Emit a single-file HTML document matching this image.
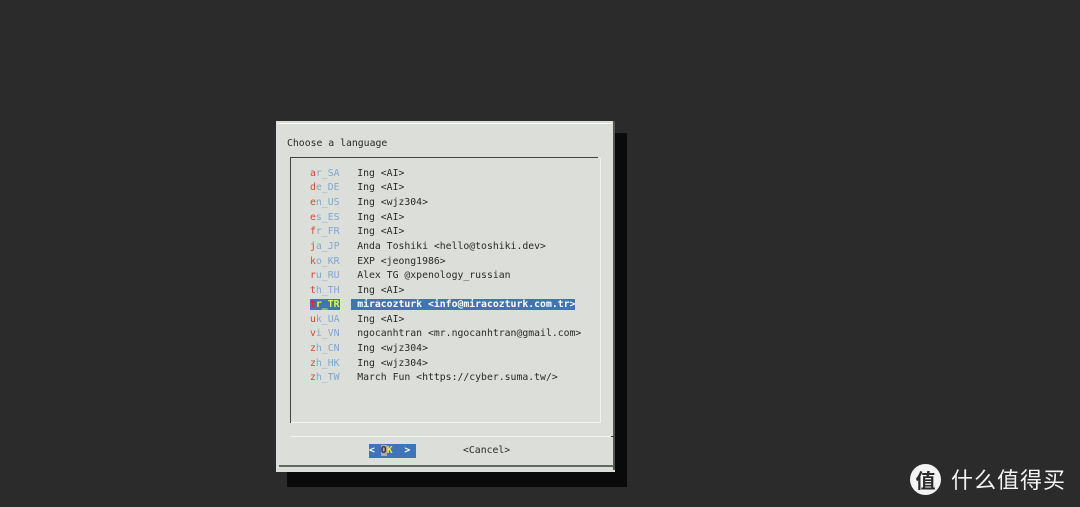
<!DOCTYPE html>
<html><head><style>
body{margin:0;width:1080px;height:507px;background:#2b2b2b;position:relative;overflow:hidden;font-family:"DejaVu Sans Mono","Liberation Mono",monospace;font-size:9.8px;color:#2a2a2a;}
.sh{position:absolute;left:287px;top:133px;width:340px;height:354px;background:#0a0a0a;}
.dlg{position:absolute;left:276px;top:121px;width:339px;height:351px;background:#dcdfd9;}
.t{position:absolute;white-space:pre;}
.row{position:absolute;left:310px;height:14px;line-height:14px;white-space:pre;}
.c{color:#d04a34}.b{color:#7ea6d4}
.sel{background:#3f74b8;color:#fff;}
</style></head><body>
<div class="sh"></div>
<div class="dlg">
 <div style="position:absolute;left:2px;top:2px;width:334px;height:1px;background:#fff"></div>
 <div style="position:absolute;right:0;top:0;width:2px;height:349px;background:#555"></div>
 <div style="position:absolute;left:3px;bottom:5px;width:334px;height:2px;background:#666"></div>
</div>
<div class="t" style="left:287px;top:137px;line-height:14px">Choose a language</div>
<div style="position:absolute;left:290px;top:157px;width:308px;height:1px;background:#444"></div>
<div style="position:absolute;left:290px;top:157px;width:1px;height:266px;background:#444"></div>
<div style="position:absolute;left:291px;top:158px;width:309px;height:264px;border-right:1px solid #f2f2f0;border-bottom:1px solid #f2f2f0;"></div>
<div style="position:absolute;left:291px;top:436px;width:322px;height:1px;background:#f2f2f0"></div>
<div style="position:absolute;left:611px;top:436px;width:3px;height:1px;background:#333"></div>

<div class="row" style="top:166.5px"><span class="c">a</span><span class="b">r_SA</span>   Ing &lt;AI&gt;</div>
<div class="row" style="top:181.2px"><span class="c">d</span><span class="b">e_DE</span>   Ing &lt;AI&gt;</div>
<div class="row" style="top:195.9px"><span class="c">e</span><span class="b">n_US</span>   Ing &lt;wjz304&gt;</div>
<div class="row" style="top:210.6px"><span class="c">e</span><span class="b">s_ES</span>   Ing &lt;AI&gt;</div>
<div class="row" style="top:225.3px"><span class="c">f</span><span class="b">r_FR</span>   Ing &lt;AI&gt;</div>
<div class="row" style="top:240px"><span class="c">j</span><span class="b">a_JP</span>   Anda Toshiki &lt;hello@toshiki.dev&gt;</div>
<div class="row" style="top:254.7px"><span class="c">k</span><span class="b">o_KR</span>   EXP &lt;jeong1986&gt;</div>
<div class="row" style="top:269.4px"><span class="c">r</span><span class="b">u_RU</span>   Alex TG @xpenology_russian</div>
<div class="row" style="top:284.1px"><span class="c">t</span><span class="b">h_TH</span>   Ing &lt;AI&gt;</div>
<div class="row" style="top:297.5px;font-weight:bold"><span class="sel"><span style="color:#e23">t</span><span style="color:#ee4">r_TR</span></span>  <span class="sel"> miracozturk &lt;info@miracozturk.com.tr&gt;</span></div>
<div class="row" style="top:312.5px"><span class="c">u</span><span class="b">k_UA</span>   Ing &lt;AI&gt;</div>
<div class="row" style="top:327.2px"><span class="c">v</span><span class="b">i_VN</span>   ngocanhtran &lt;mr.ngocanhtran@gmail.com&gt;</div>
<div class="row" style="top:341.9px"><span class="c">z</span><span class="b">h_CN</span>   Ing &lt;wjz304&gt;</div>
<div class="row" style="top:356.6px"><span class="c">z</span><span class="b">h_HK</span>   Ing &lt;wjz304&gt;</div>
<div class="row" style="top:371.3px"><span class="c">z</span><span class="b">h_TW</span>   March Fun &lt;https://cyber.suma.tw/&gt;</div>

<div class="t sel" style="left:369px;top:444px;width:47px;height:14px;line-height:14px;font-weight:bold">&lt; <span style="background:#aaa;color:#333">O</span><span style="color:#ee4">K</span>  &gt;</div>
<div class="t" style="left:463px;top:444px;line-height:14px">&lt;Cancel&gt;</div>

<div style="position:absolute;left:910px;top:464px;width:31px;height:31px;border-radius:50%;background:#f4f4f4;color:#2b2b2b;font:bold 20px 'Noto Sans CJK SC',sans-serif;text-align:center;line-height:31px">值</div>
<div class="t" style="left:951px;top:462px;font:22px 'Noto Sans CJK SC',sans-serif;color:#f4f4f4;line-height:34px;letter-spacing:1px">什么值得买</div>
</body></html>
